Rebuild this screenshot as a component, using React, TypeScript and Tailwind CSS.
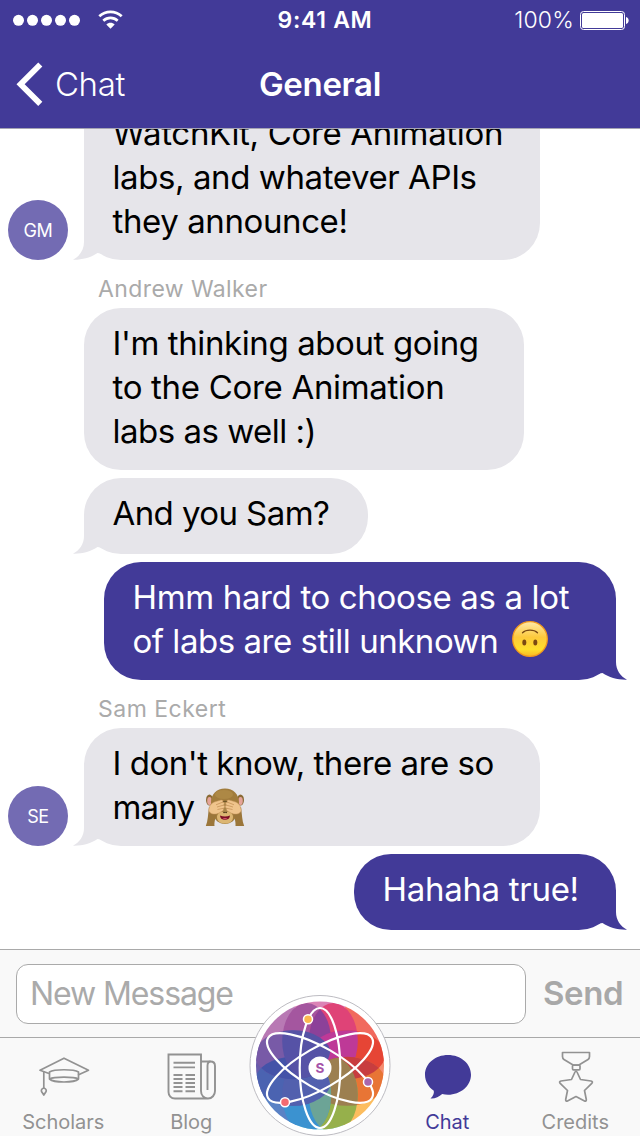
import type { ReactNode } from "react";

type Line = { content: ReactNode; className?: string };

function Tail({ mine }: { mine?: boolean }) {
  return (
    <svg
      viewBox="-12 -40 32 40"
      className={
        mine
          ? "absolute -right-3 bottom-0 h-10 w-8 -scale-x-100 fill-[#423a98]"
          : "absolute bottom-0 -left-3 h-10 w-8 fill-[#e6e5ea]"
      }
    >
      <path d="M0 -40V-18C0 -10 -4.500 -3.500 -11 -0.300C-2 0 7 -2.500 13.500 -7L20 -6L20 -40Z" />
    </svg>
  );
}

function Bubble({ lines, mine, tail, className }: { lines: Line[]; mine?: boolean; tail?: boolean; className: string }) {
  return (
    <div
      className={`relative shrink-0 pt-[13px] pl-[28.5px] text-[33px] leading-[44px] whitespace-nowrap ${
        mine ? "ml-auto bg-[#423a98] text-white" : "bg-[#e6e5ea] text-black"
      } ${className}`}
    >
      {lines.map((line, i) => (
        <div key={i} className={`flex h-11 items-center ${line.className ?? ""}`}>
          {line.content}
        </div>
      ))}
      {tail && <Tail mine={mine} />}
    </div>
  );
}

function Avatar({ initials }: { initials: string }) {
  return (
    <div className="flex size-[60px] shrink-0 items-center justify-center rounded-full bg-[#736bb3] text-[18px] tracking-[-0.4px] text-white">
      {initials}
    </div>
  );
}

function UpsideDown() {
  return (
    <svg viewBox="0 0 36 36" className="ml-[14px] size-9 -translate-y-[2px]">
      <defs>
        <linearGradient id="face" x1="0" y1="0" x2="0" y2="1">
          <stop offset="0" stopColor="#ffe9a8" />
          <stop offset="0.45" stopColor="#fdc93b" />
          <stop offset="0.8" stopColor="#fee02c" />
          <stop offset="1" stopColor="#f9b825" />
        </linearGradient>
      </defs>
      <circle cx="18" cy="18" r="17.300" fill="url(#face)" stroke="#f39a1d" strokeWidth="1.300" />
      <path d="M10.500 11.800C14 8.300 22 8.300 25.500 11.800" fill="none" stroke="#7b4a12" strokeWidth="1.300" strokeLinecap="round" />
      <ellipse cx="12.300" cy="21.500" rx="2" ry="3" fill="#7b4a12" />
      <ellipse cx="23.300" cy="21.500" rx="2" ry="3" fill="#7b4a12" />
    </svg>
  );
}

function Monkey() {
  return (
    <svg viewBox="0 0 40 40" className="ml-[11px] size-10 translate-y-px">
      <ellipse cx="4.500" cy="12" rx="3.500" ry="5.500" fill="#8a6a35" />
      <ellipse cx="35.500" cy="12" rx="3.500" ry="5.500" fill="#8a6a35" />
      <ellipse cx="4.500" cy="13" rx="2.300" ry="4" fill="#e5a49a" />
      <ellipse cx="35.500" cy="13" rx="2.300" ry="4" fill="#e5a49a" />
      <path d="M20 0.500C28.500 0.500 34 6.500 34 14.500C34 19 32.500 22 32 25C31 32 26 36 20 36S9 32 8 25C7.500 22 6 19 6 14.500C6 6.500 11.500 0.500 20 0.500Z" fill="#a17c3c" />
      <ellipse cx="19" cy="6.500" rx="9" ry="4.500" fill="#ad8845" />
      <path d="M20 22C25 22 28 26 28 29C28 33.500 24.500 35.500 20 35.500S12 33.500 12 29C12 26 15 22 20 22Z" fill="#dcb673" />
      <path d="M15 15C15 12 25 12 25 15L26 22L20 25L14 22Z" fill="#6e5427" />
      <path d="M18 14H22L23 24H17Z" fill="#a98548" />
      <path d="M15 27.500C18 28.800 22 28.800 25 27.500C24.500 31 22.500 31.800 20 31.800S15.500 31 15 27.500Z" fill="#7d0f24" />
      <path d="M17.500 30.500C19 29.800 21 29.800 22.500 30.500C21.500 31.600 18.500 31.600 17.500 30.500Z" fill="#d9536f" />
      <circle cx="19" cy="24.500" r="0.700" fill="#3d2a10" />
      <circle cx="21.200" cy="24.500" r="0.700" fill="#3d2a10" />
      <path d="M4 19L12 23C11 29 9 33 9.500 38H0.800C3 33 3 26 4 19Z" fill="#9b763a" />
      <path d="M36 19L28 23C29 29 31 33 30.500 38H39.200C37 33 37 26 36 19Z" fill="#9b763a" />
      <path d="M3.800 23C4 17.500 6.500 15 10 13.800L16 12C18.300 11.800 18.600 13.500 17 14.400C19.500 14 20 16.300 18.300 17.200C20.200 17.300 20 19.500 18.300 20.300C19 21.800 18 23.300 16 23.800C13.500 26 6.500 28 3.800 23Z" fill="#efc48c" stroke="#c4935a" strokeWidth="0.500" />
      <path d="M36.200 23C36 17.500 33.500 15 30 13.800L24 12C21.700 11.800 21.400 13.500 23 14.400C20.500 14 20 16.300 21.700 17.200C19.800 17.300 20 19.500 21.700 20.300C21 21.800 22 23.300 24 23.800C26.500 26 33.500 28 36.200 23Z" fill="#efc48c" stroke="#c4935a" strokeWidth="0.500" />
      <path d="M11 16.800L17 14.400M12 19L18.300 17.200M12.500 21.500L18.300 20.300M29 16.800L23 14.400M28 19L21.700 17.200M27.500 21.500L21.700 20.300" fill="none" stroke="#c08d52" strokeWidth="0.700" />
    </svg>
  );
}

const petals = [
  { color: "#a4569f", overlap: "#8c4199" },
  { color: "#df4377", overlap: "#be3997" },
  { color: "#e64535", overlap: "#c83d3f" },
  { color: "#e87535", overlap: "#9c7f50" },
  { color: "#96b04b", overlap: "#6ca496" },
  { color: "#3b92d0", overlap: "#5260ae" },
  { color: "#4b63b1", overlap: "#4453a8" },
  { color: "#785aa7", overlap: "#5652a6" },
];

const centers = [
  [-13.3, -27],
  [13.3, -27],
  [27, -13.3],
  [27, 13.3],
  [13.3, 27],
  [-13.3, 27],
  [-27, 13.3],
  [-27, -13.3],
];

const wedges = ["#db83b6", "#f16a5e", "#f58d71", "#fcbd5f", "#82d3d6", "#5a82c5", "#6a5cab", "#b879b4"];

function Petal({ i, fill }: { i: number; fill: string }) {
  const [cx, cy] = centers[i];
  const tall = Math.abs(cy) > Math.abs(cx);
  return <ellipse cx={cx} cy={cy} rx={tall ? 24.5 : 38} ry={tall ? 38 : 24.5} fill={fill} />;
}

function AtomLogo() {
  return (
    <svg viewBox="-71 -73 142 142" className="absolute top-[-43px] left-1/2 size-[142px] -translate-x-1/2">
      <defs>
        <clipPath id="disc">
          <circle cx="0" cy="-2.500" r="64" />
        </clipPath>
        {petals.map((_, i) => (
          <clipPath key={i} id={`petal${i}`}>
            <Petal i={i} fill="#000" />
          </clipPath>
        ))}
      </defs>
      <circle cx="0" cy="-2.500" r="70" fill="#fff" stroke="#bdbcc2" strokeWidth="1" />
      <g clipPath="url(#disc)">
        {wedges.map((c, i) => (
          <path key={c} d="M0 0L-34 -82H34Z" fill={c} transform={`rotate(${i * 45})`} />
        ))}
        {petals.map((p, i) => (
          <Petal key={i} i={i} fill={p.color} />
        ))}
        {petals.map((p, i) => (
          <g key={i} clipPath={`url(#petal${i})`}>
            <Petal i={(i + 1) % 8} fill={p.overlap} />
          </g>
        ))}
      </g>
      <g fill="none" stroke="#fff" strokeWidth="2.200">
        <ellipse rx="20.300" ry="60" />
        <ellipse rx="20.300" ry="60" transform="rotate(60)" />
        <ellipse rx="20.300" ry="60" transform="rotate(-60)" />
      </g>
      <circle r="11.500" fill="#fff" />
      <g stroke="#fff" strokeWidth="1.500">
        <circle cx="-12" cy="-48.700" r="4.500" fill="#fcb750" />
        <circle cx="48" cy="14" r="4.500" fill="#a966ad" />
        <circle cx="-35" cy="34.300" r="4.500" fill="#f36b70" />
      </g>
      <text x="0" y="5" textAnchor="middle" fontSize="13.500" fontWeight="700" fill="#a653a8">
        S
      </text>
    </svg>
  );
}

function ScholarsIcon() {
  return (
    <svg viewBox="0 0 52 40" className="h-10 w-[52px]" fill="none" stroke="#929292" strokeWidth="1.700" strokeLinejoin="round">
      <path d="M11 16.500L2 13.200L26 1.200L50.500 13.200L40 18" />
      <path d="M11.500 15C16 12 36 12 40.500 15V22C36 26 16 26 11.500 22Z" />
      <path d="M11.500 22C16 19.500 36 19.500 40.500 22" />
      <path d="M5.800 14.500V31" />
      <path d="M5.800 31C3.800 31.500 3 33 3.500 34.500L5.800 38L8.100 34.500C8.600 33 7.800 31.500 5.800 31Z" />
    </svg>
  );
}

function BlogIcon() {
  return (
    <svg viewBox="0 0 50 48" className="h-12 w-[50px]" fill="none" stroke="#929292" strokeWidth="1.900">
      <path d="M42 45.500H8C4 45.500 1.500 42.500 1.500 39V1.500H34V38C34 42.500 37 45.500 41 45.500S48 42 48 38V13C48 10 46 8.500 43.500 8.500H34" />
      <path d="M40.500 37V13C40.500 10 41.500 8.500 43.500 8.500" />
      <path d="M6.500 9.700H28M6.500 14.400H28M6.500 22H15.500M18.500 22H28M6.500 26H15.500M18.500 26H28M6.500 30H15.500M18.500 30H28M6.500 34H15.500M18.500 34H28M6.500 38.300H15.500M18.500 38.300H28" />
    </svg>
  );
}

function ChatIcon() {
  return (
    <svg viewBox="0 0 48 46" className="h-[46px] w-12 fill-[#423a98]">
      <path d="M24 1C36.700 1 47 9.600 47 20.700C47 31.800 36.700 40.700 24 40.700C22 40.700 20 40.500 18.200 40.100C15 43 10.500 45 6.500 44.500C9 42.500 10.300 39.500 9.800 36.800C4.500 33 1 27.300 1 20.700C1 9.600 11.300 1 24 1Z" />
    </svg>
  );
}

function CreditsIcon() {
  return (
    <svg viewBox="0 0 36 52" className="h-[52px] w-9" fill="none" stroke="#929292" strokeWidth="1.700" strokeLinejoin="round">
      <path d="M4.500 1.500H31.500V5.500C31.500 7 31 7.800 30 8.500L20.500 14.200H15.500L6 8.500C5 7.800 4.500 7 4.500 5.500Z" />
      <rect x="14.500" y="14" width="7.500" height="4.800" rx="1" />
      <path d="M18 20C18.500 20 18.800 20.500 19 21L22.500 28.500L33 30C34.500 30.300 34.800 31.300 33.800 32.300L26.500 39.500L28.300 48.500C28.500 50 27.500 50.500 26.500 50L18 45.500L9.500 50C8.500 50.500 7.500 50 7.700 48.500L9.500 39.500L2.200 32.300C1.200 31.300 1.500 30.300 3 30L13.500 28.500L17 21C17.200 20.500 17.500 20 18 20Z" />
    </svg>
  );
}

function Tab({ label, icon, className }: { label: string; icon: ReactNode; className: string }) {
  return (
    <div className="flex w-32 flex-col items-center">
      <div className="flex h-[74px] items-center pt-1">{icon}</div>
      <div className={`pr-[1.5px] text-[20px] leading-5 ${className}`}>{label}</div>
    </div>
  );
}

export default function App() {
  return (
    <div className="flex h-[1136px] w-[640px] flex-col overflow-hidden bg-white font-['Inter','Liberation_Sans',sans-serif]">
      <header className="relative z-10 h-[129px] shrink-0 border-b border-[#a5a4b3] bg-[#423a98] text-white">
        <div className="grid h-10 grid-cols-3 items-center">
          <div className="flex items-center pl-3">
            <svg viewBox="0 0 112 20" className="h-5 w-28 fill-white">
              <circle cx="6.500" cy="10.300" r="5.500" />
              <circle cx="20.500" cy="10.300" r="5.500" />
              <circle cx="34.500" cy="10.300" r="5.500" />
              <circle cx="48.500" cy="10.300" r="5.500" />
              <circle cx="62.500" cy="10.300" r="5.500" />
              <g fill="none" stroke="#fff">
                <path d="M87.300 6.300C93.700 0.500 103.300 0.500 109.700 6.300" strokeWidth="2.800" />
                <path d="M91.300 10.800C95.400 6.900 101.600 6.900 105.700 10.800" strokeWidth="2.600" />
              </g>
              <path d="M94.300 14.500C96.600 12.200 100.400 12.200 102.700 14.500L98.500 18.800Z" />
            </svg>
          </div>
          <div className="pt-px pl-[10px] text-center text-[23px] font-semibold tracking-[0.7px] whitespace-nowrap">9:41 AM</div>
          <div className="flex items-center justify-end gap-[6px] pr-[11px]">
            <span className="pt-px text-[23px] font-light tracking-[0.2px]">100%</span>
            <svg viewBox="0 0 49 20" className="h-5 w-[49px]">
              <rect x="0.500" y="1.500" width="44" height="18" rx="3" fill="none" stroke="#fff" />
              <rect x="2" y="3" width="41" height="15" rx="1.500" fill="#fff" />
              <path d="M46 7C49.500 7.500 49.500 13.500 46 14Z" fill="#fff" />
            </svg>
          </div>
        </div>
        <div className="grid h-[88px] grid-cols-3 items-center">
          <div className="flex items-center gap-3 pl-4">
            <svg viewBox="0 0 27 44" className="h-11 w-[27px]" fill="none" stroke="#fff" strokeWidth="5.800">
              <path d="M24.300 2.500L4.600 22.200L24.300 41.900" />
            </svg>
            <span className="pt-px text-[33px] font-light tracking-[-0.4px]">Chat</span>
          </div>
          <div className="pt-px text-center text-[33px] font-semibold tracking-[-0.3px]">General</div>
        </div>
      </header>

      <main className="flex min-h-0 flex-1 flex-col justify-end overflow-hidden pr-6 pb-[19px] pl-2">
        <div className="flex shrink-0 items-end gap-4">
          <Avatar initials="GM" />
          <Bubble
            tail
            className="h-[162px] w-[456px] rounded-b-[37px]"
            lines={[
              { content: "WatchKit, Core Animation", className: "tracking-[-0.33px]" },
              { content: "labs, and whatever APIs", className: "tracking-[-0.41px]" },
              { content: "they announce!", className: "tracking-[-0.4px]" },
            ]}
          />
        </div>
        <div className="flex h-12 shrink-0 items-center pt-[10px] pl-[90px] text-[23px] text-[#aaaaaa]">
          <span className="tracking-[0.4px]">Andrew Walker</span>
        </div>
        <div className="flex shrink-0 flex-col gap-2 pl-[76px]">
          <Bubble
            className="h-[162px] w-[440px] rounded-[37px]"
            lines={[
              { content: "I'm thinking about going", className: "tracking-[-0.4px]" },
              { content: "to the Core Animation", className: "tracking-[-0.31px]" },
              { content: "labs as well :)", className: "tracking-[-0.5px]" },
            ]}
          />
          <Bubble
            tail
            className="h-[76px] w-[284px] rounded-[37px]"
            lines={[{ content: "And you Sam?", className: "tracking-[-0.58px]" }]}
          />
        </div>
        <div className="mt-2 flex shrink-0">
          <Bubble
            mine
            tail
            className="h-[118px] w-[512px] rounded-[37px]"
            lines={[
              { content: "Hmm hard to choose as a lot", className: "tracking-[-0.35px]" },
              {
                content: (
                  <>
                    of labs are still unknown
                    <UpsideDown />
                  </>
                ),
                className: "tracking-[-0.47px]",
              },
            ]}
          />
        </div>
        <div className="flex h-12 shrink-0 items-center pt-[10px] pl-[90px] text-[23px] text-[#aaaaaa]">
          <span className="tracking-[0.5px]">Sam Eckert</span>
        </div>
        <div className="flex shrink-0 items-end gap-4">
          <Avatar initials="SE" />
          <Bubble
            tail
            className="h-[118px] w-[456px] rounded-[37px]"
            lines={[
              { content: "I don't know, there are so", className: "tracking-[-0.48px]" },
              {
                content: (
                  <>
                    many
                    <Monkey />
                  </>
                ),
                className: "tracking-[-0.8px]",
              },
            ]}
          />
        </div>
        <div className="mt-2 flex shrink-0">
          <Bubble
            mine
            tail
            className="h-[76px] w-[262px] rounded-[37px]"
            lines={[{ content: "Hahaha true!", className: "tracking-[-0.3px]" }]}
          />
        </div>
      </main>

      <div className="flex h-[88px] shrink-0 items-center border-t border-[#a9a9a9] bg-[#f9f9f9] pl-4">
        <div className="flex h-[60px] w-[510px] items-center rounded-[12px] border border-[#aaaaaa] bg-white pt-px pl-[13px] text-[32px] tracking-[-1.1px] text-[#aaaaaa]">
          New Message
        </div>
        <div className="pl-[17px] text-[33px] font-semibold tracking-[-0.4px] text-[#a8a8a8]">Send</div>
      </div>

      <nav className="relative flex h-[99px] shrink-0 border-t border-[#a9a9a9] bg-[#f9f9f9] text-[#929292]">
        <Tab label="Scholars" icon={<ScholarsIcon />} className="" />
        <Tab label="Blog" icon={<BlogIcon />} className="" />
        <div className="w-32" />
        <Tab label="Chat" icon={<ChatIcon />} className="text-[#423a98]" />
        <Tab label="Credits" icon={<CreditsIcon />} className="" />
        <AtomLogo />
      </nav>
    </div>
  );
}
